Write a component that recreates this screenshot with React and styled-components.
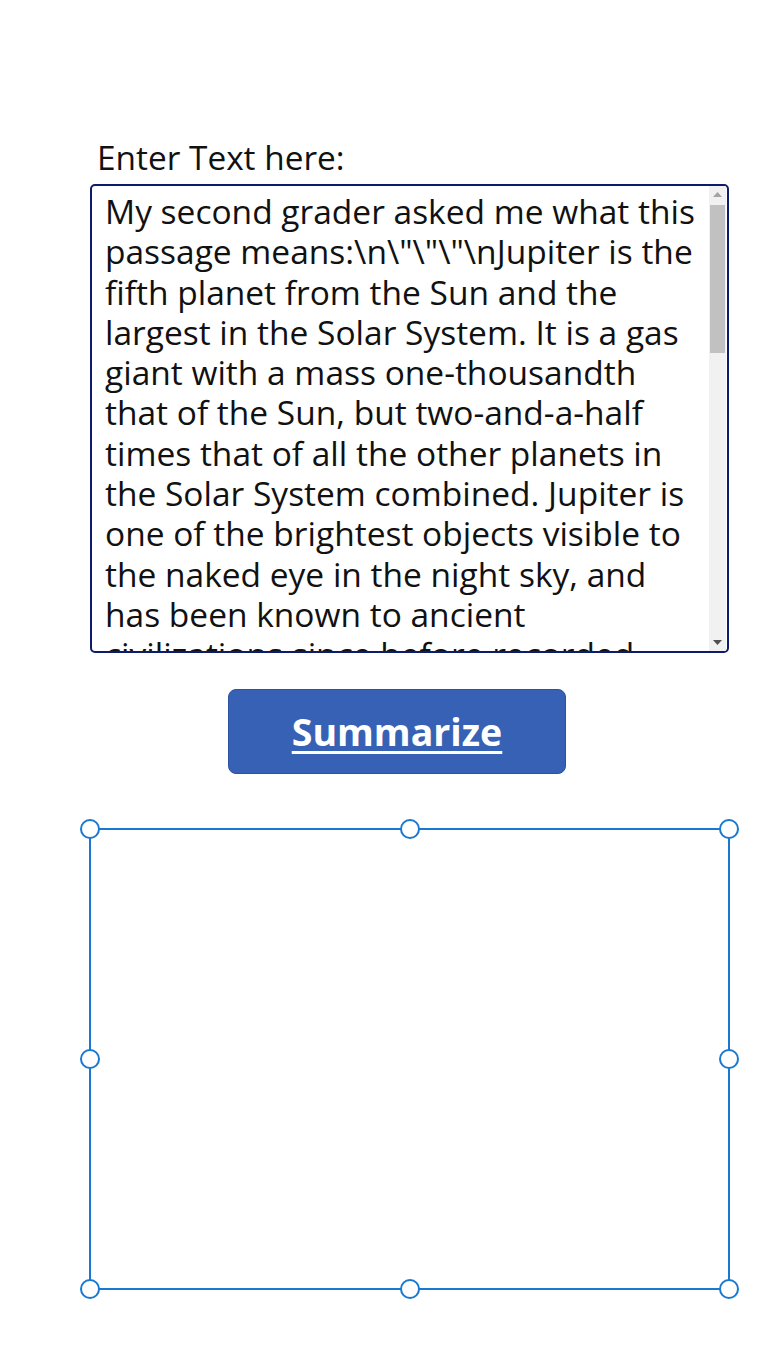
import React from "react";
import styled, { createGlobalStyle } from "styled-components";

const Global = createGlobalStyle`
  html, body { margin: 0; padding: 0; background: #ffffff; }
  body { font-family: "Open Sans", "Noto Sans", sans-serif; color: #000; }
`;

const Page = styled.div`
  display: flex;
  flex-direction: column;
  width: 640px;
  padding: 135px 0 60px 89px;
`;

const Label = styled.div`
  margin-left: 8px;
  font-size: 33.4px;
  line-height: 44px;
  color: #111;
`;

const TextBox = styled.div`
  margin: 5px 0 0 1px;
  height: 465px;
  border: 2px solid #0c1b6e;
  border-radius: 5px;
  display: flex;
  overflow: hidden;
`;

const TextArea = styled.div`
  flex: 1;
  padding: 5px 8px 0 13px;
  font-size: 33.5px;
  line-height: 40.3px;
  color: #111;
  overflow: hidden;
  overflow-wrap: break-word;
`;

const Scrollbar = styled.div`
  width: 17px;
  margin-right: 1px;
  background: #f1f1f1;
  display: flex;
  flex-direction: column;
`;

const Arrow = styled.div`
  height: 17px;
  display: flex;
  align-items: center;
  justify-content: center;
`;

const Track = styled.div`
  flex: 1;
  display: flex;
  flex-direction: column;
`;

const Thumb = styled.div`
  height: 148px;
  margin: 2px 1px 0;
  background: #c1c1c1;
`;

const Button = styled.button`
  margin: 36px 0 0 139px;
  width: 338px;
  height: 85px;
  background: #3761b4;
  border: 1px solid #2c52a0;
  border-radius: 8px;
  color: #ffffff;
  font-family: "Open Sans", "Noto Sans", sans-serif;
  font-weight: 700;
  font-size: 37.5px;
  text-decoration: underline;
  text-decoration-thickness: 3px;
  text-underline-offset: 5px;
  cursor: pointer;
  padding: 0;
`;

const Selection = styled.div`
  position: relative;
  margin-top: 54px;
  width: 637px;
  height: 458px;
  border: 2px solid #1a78d0;
`;

const Handle = styled.div`
  position: absolute;
  width: 16px;
  height: 16px;
  border-radius: 50%;
  border: 2px solid #1a78d0;
  background: #fff;
  transform: translate(-50%, -50%);
`;

const text =
  'My second grader asked me what this passage means:\\n\\"\\"\\"\\nJupiter is the fifth planet from the Sun and the largest in the Solar System. It is a gas giant with a mass one-thousandth that of the Sun, but two-and-a-half times that of all the other planets in the Solar System combined. Jupiter is one of the brightest objects visible to the naked eye in the night sky, and has been known to ancient civilizations since before recorded history. It is named after the Roman god Jupiter.';

const handles = [
  ["-1px", "-1px"],
  ["319px", "-1px"],
  ["calc(100% + 1px)", "-1px"],
  ["-1px", "50%"],
  ["calc(100% + 1px)", "50%"],
  ["-1px", "calc(100% + 1px)"],
  ["319px", "calc(100% + 1px)"],
  ["calc(100% + 1px)", "calc(100% + 1px)"],
];

export default function App() {
  return (
    <>
      <Global />
      <Page>
        <Label>Enter Text here:</Label>
        <TextBox>
          <TextArea>{text}</TextArea>
          <Scrollbar>
            <Arrow>
              <svg width="9" height="5" viewBox="0 0 9 5">
                <path d="M0 5 L4.5 0 L9 5 Z" fill="#a3a3a3" />
              </svg>
            </Arrow>
            <Track>
              <Thumb />
            </Track>
            <Arrow>
              <svg width="9" height="5" viewBox="0 0 9 5">
                <path d="M0 0 L4.5 5 L9 0 Z" fill="#505050" />
              </svg>
            </Arrow>
          </Scrollbar>
        </TextBox>
        <Button>Summarize</Button>
        <Selection>
          {handles.map(([l, t], i) => (
            <Handle key={i} style={{ left: l, top: t }} />
          ))}
        </Selection>
      </Page>
    </>
  );
}
